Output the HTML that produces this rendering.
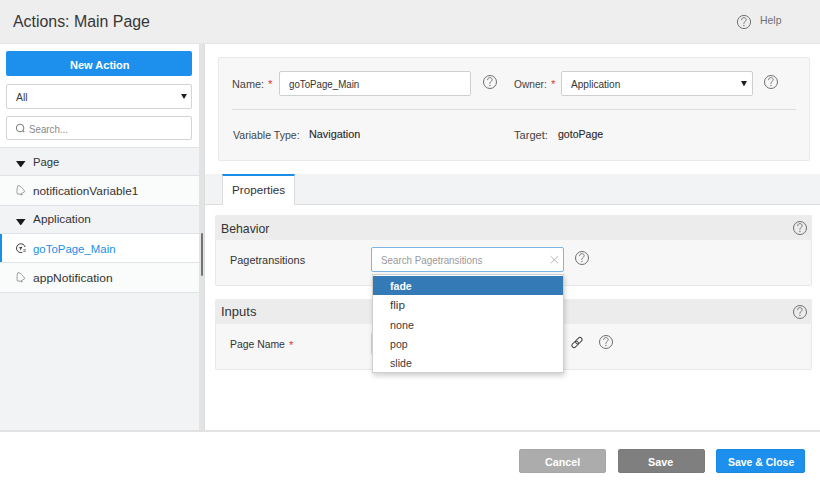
<!DOCTYPE html>
<html><head><meta charset="utf-8">
<style>
*{box-sizing:border-box;margin:0;padding:0}
html,body{width:820px;height:488px;overflow:hidden;background:#fff;font-family:"Liberation Sans",sans-serif;color:#333}
.a{position:absolute}
.t{position:absolute;line-height:1;white-space:pre}
</style></head><body>
<div class="a" style="left:0px;top:0px;width:820px;height:43px;background:#eeeeee;"></div>
<div class="a" style="left:0px;top:43px;width:820px;height:1px;background:#e4e4e4;"></div>
<div class="t" style="left:13.00px;top:14.00px;font-size:15.6px;color:#363636;font-weight:normal;transform:scaleX(1.0191);transform-origin:0 0;">Actions: Main Page</div>
<svg class="a" style="left:736.0px;top:14.0px" width="16" height="16" viewBox="0 0 16 16"><circle cx="8" cy="8" r="6.6" fill="none" stroke="#707070" stroke-width="1"/><path d="M5.6 6.1 C5.6 4.5 6.6 3.6 7.9 3.6 C9.3 3.6 10.2 4.5 10.2 5.8 C10.2 7.3 7.9 7.6 7.9 9.2 L7.9 9.9" fill="none" stroke="#707070" stroke-width="0.9"/><circle cx="7.9" cy="11.5" r="0.65" fill="#707070"/></svg>
<div class="t" style="left:760.07px;top:15.00px;font-size:11.5px;color:#6e6e6e;font-weight:normal;transform:scaleX(0.9056);transform-origin:0 0;">Help</div>
<div class="a" style="left:0px;top:44px;width:200px;height:386px;background:#f2f3f5;"></div>
<div class="a" style="left:0px;top:44px;width:200px;height:103px;background:#ffffff;"></div>
<div class="a" style="left:199px;top:44px;width:6px;height:386px;background:#e3e3e3;"></div>
<div class="a" style="left:204px;top:44px;width:1px;height:386px;background:#dcdcdc;"></div>
<div class="a" style="left:201px;top:233px;width:2px;height:43px;background:#747474;border-radius:1px"></div>
<div class="a" style="left:6px;top:51px;width:186px;height:25px;background:#1c90ec;border-radius:2px"></div>
<div class="t" style="left:69.83px;top:60.00px;font-size:11.5px;color:#fff;font-weight:bold;transform:scaleX(0.9577);transform-origin:0 0;">New Action</div>
<div class="a" style="left:6px;top:84px;width:186px;height:25px;background:#fff;border:1px solid #d4d4d4;border-radius:2px"></div>
<div class="t" style="left:16.00px;top:93.00px;font-size:10.2px;color:#3c3c3c;font-weight:normal;transform:scaleX(1.0271);transform-origin:0 0;">All</div>
<svg class="a" style="left:180.5px;top:93.8px" width="6" height="5" viewBox="0 0 6 5"><path d="M0 0 L6 0 L3.0 5 Z" fill="#1f1f1f"/></svg>
<div class="a" style="left:6px;top:116px;width:186px;height:24px;background:#fff;border:1px solid #d4d4d4;border-radius:2px"></div>
<svg class="a" style="left:14px;top:122px" width="13" height="13" viewBox="0 0 13 13"><circle cx="6.1" cy="6" r="3.8" fill="none" stroke="#7a7a7a" stroke-width="1"/><path d="M8.8 8.7 L10.3 10.2" stroke="#7a7a7a" stroke-width="1.1"/></svg>
<div class="t" style="left:28.91px;top:124.00px;font-size:11px;color:#888;font-weight:normal;transform:scaleX(0.8855);transform-origin:0 0;">Search...</div>
<div class="a" style="left:0px;top:147px;width:199px;height:1px;background:#e4e4e4;"></div>
<div class="a" style="left:0px;top:148px;width:199px;height:27px;background:#f2f3f5;"></div>
<div class="a" style="left:0px;top:175px;width:199px;height:1px;background:#dfe3e8;"></div>
<div class="t" style="left:32.76px;top:157.00px;font-size:11.5px;color:#333;font-weight:normal;transform:scaleX(0.9774);transform-origin:0 0;">Page</div>
<svg class="a" style="left:16.3px;top:160.6px" width="9.5" height="6.5" viewBox="0 0 9.5 6.5"><path d="M0 0 L9.5 0 L4.75 6.5 Z" fill="#1a1a1a"/></svg>
<div class="a" style="left:0px;top:176px;width:199px;height:29px;background:#fafbfb;"></div>
<div class="a" style="left:0px;top:205px;width:199px;height:1px;background:#dfe3e8;"></div>
<div class="t" style="left:32.83px;top:186.00px;font-size:11.5px;color:#333;font-weight:normal;transform:scaleX(1.0249);transform-origin:0 0;">notificationVariable1</div>
<svg class="a" style="left:15px;top:184px" width="12" height="13" viewBox="0 0 12 13"><path d="M3 1.5 C5.5 1.8 8 4.5 9.8 7.6 L5.8 10.2 L2.2 9.9 C1.8 7 1.9 3.5 3 1.5 Z" fill="none" stroke="#999" stroke-width="0.95" stroke-linejoin="round"/><path d="M5.8 10 L7.4 11.1" fill="none" stroke="#888" stroke-width="1.1"/></svg>
<div class="a" style="left:0px;top:206px;width:199px;height:27px;background:#f2f3f5;"></div>
<div class="a" style="left:0px;top:233px;width:199px;height:1px;background:#dfe3e8;"></div>
<div class="t" style="left:32.90px;top:214.00px;font-size:11.5px;color:#333;font-weight:normal;transform:scaleX(1.0280);transform-origin:0 0;">Application</div>
<svg class="a" style="left:16.3px;top:218.6px" width="9.5" height="6.5" viewBox="0 0 9.5 6.5"><path d="M0 0 L9.5 0 L4.75 6.5 Z" fill="#1a1a1a"/></svg>
<div class="a" style="left:0px;top:234px;width:199px;height:28px;background:#ffffff;"></div>
<div class="a" style="left:0px;top:262px;width:199px;height:1px;background:#dfe3e8;"></div>
<div class="t" style="left:32.74px;top:244.00px;font-size:11.5px;color:#1a8fe8;font-weight:normal;transform:scaleX(0.9929);transform-origin:0 0;">goToPage_Main</div>
<svg class="a" style="left:15px;top:241px" width="12" height="12" viewBox="0 0 12 12"><path d="M10.15 6.06 A4.4 4.4 0 1 0 7.4 11.33" fill="none" stroke="#3a3a3a" stroke-width="1"/><path d="M3.1 7.0 L7.4 5.4 L5.3 9.9 L5.4 7.3 Z" fill="#1f1f1f"/><path d="M8.3 8.85 L11 8.85 M8.3 10.35 L10.6 10.35" stroke="#444" stroke-width="0.75"/></svg>
<div class="a" style="left:0px;top:263px;width:199px;height:29px;background:#fafbfb;"></div>
<div class="a" style="left:0px;top:292px;width:199px;height:1px;background:#dfe3e8;"></div>
<div class="t" style="left:32.92px;top:273.00px;font-size:11.5px;color:#333;font-weight:normal;transform:scaleX(1.0466);transform-origin:0 0;">appNotification</div>
<svg class="a" style="left:15px;top:271px" width="12" height="13" viewBox="0 0 12 13"><path d="M3 1.5 C5.5 1.8 8 4.5 9.8 7.6 L5.8 10.2 L2.2 9.9 C1.8 7 1.9 3.5 3 1.5 Z" fill="none" stroke="#999" stroke-width="0.95" stroke-linejoin="round"/><path d="M5.8 10 L7.4 11.1" fill="none" stroke="#888" stroke-width="1.1"/></svg>
<div class="a" style="left:0px;top:234px;width:2px;height:28px;background:#1a8fe8;"></div>
<div class="a" style="left:218px;top:57px;width:592px;height:104px;background:#f7f7f7;border:1px solid #e9e9e9;border-radius:2px"></div>
<div class="t" style="left:232.03px;top:79.00px;font-size:11.5px;color:#444;font-weight:normal;transform:scaleX(0.9449);transform-origin:0 0;">Name:</div>
<div class="t" style="left:267.97px;top:79.00px;font-size:11.5px;color:#e53935;font-weight:normal;transform:scaleX(0.9938);transform-origin:0 0;">*</div>
<div class="a" style="left:279px;top:71px;width:192px;height:25px;background:#fff;border:1px solid #cfcfcf;border-radius:2px"></div>
<div class="t" style="left:288.81px;top:80.00px;font-size:10.2px;color:#333;font-weight:normal;transform:scaleX(0.9542);transform-origin:0 0;">goToPage_Main</div>
<svg class="a" style="left:481.7px;top:74.0px" width="16" height="16" viewBox="0 0 16 16"><circle cx="8" cy="8" r="6.5" fill="none" stroke="#6f6f6f" stroke-width="1"/><path d="M5.6 6.1 C5.6 4.5 6.6 3.6 7.9 3.6 C9.3 3.6 10.2 4.5 10.2 5.8 C10.2 7.3 7.9 7.6 7.9 9.2 L7.9 9.9" fill="none" stroke="#6f6f6f" stroke-width="0.9"/><circle cx="7.9" cy="11.5" r="0.65" fill="#6f6f6f"/></svg>
<div class="t" style="left:513.89px;top:79.00px;font-size:11.5px;color:#444;font-weight:normal;transform:scaleX(0.8851);transform-origin:0 0;">Owner:</div>
<div class="t" style="left:550.52px;top:79.00px;font-size:11.5px;color:#e53935;font-weight:normal;transform:scaleX(0.9938);transform-origin:0 0;">*</div>
<div class="a" style="left:561px;top:71px;width:192px;height:25px;background:#fff;border:1px solid #cfcfcf;border-radius:2px"></div>
<div class="t" style="left:570.80px;top:80.00px;font-size:10.2px;color:#333;font-weight:normal;transform:scaleX(0.9885);transform-origin:0 0;">Application</div>
<svg class="a" style="left:741.25px;top:80.5px" width="6" height="5.5" viewBox="0 0 6 5.5"><path d="M0 0 L6 0 L3.0 5.5 Z" fill="#1f1f1f"/></svg>
<svg class="a" style="left:763.3px;top:74.0px" width="16" height="16" viewBox="0 0 16 16"><circle cx="8" cy="8" r="6.5" fill="none" stroke="#6f6f6f" stroke-width="1"/><path d="M5.6 6.1 C5.6 4.5 6.6 3.6 7.9 3.6 C9.3 3.6 10.2 4.5 10.2 5.8 C10.2 7.3 7.9 7.6 7.9 9.2 L7.9 9.9" fill="none" stroke="#6f6f6f" stroke-width="0.9"/><circle cx="7.9" cy="11.5" r="0.65" fill="#6f6f6f"/></svg>
<div class="a" style="left:232px;top:109px;width:564px;height:1px;background:#dddddd;"></div>
<div class="t" style="left:232.59px;top:130.00px;font-size:11.5px;color:#444;font-weight:normal;transform:scaleX(0.9194);transform-origin:0 0;">Variable Type:</div>
<div class="t" style="left:309.23px;top:130.00px;font-size:10.2px;color:#2a2a2a;font-weight:normal;transform:scaleX(1.0639);transform-origin:0 0;-webkit-text-stroke:0.12px #2a2a2a;">Navigation</div>
<div class="t" style="left:514.08px;top:130.00px;font-size:11.5px;color:#444;font-weight:normal;transform:scaleX(0.9639);transform-origin:0 0;">Target:</div>
<div class="t" style="left:558.48px;top:130.00px;font-size:10.2px;color:#2a2a2a;font-weight:normal;transform:scaleX(1.0352);transform-origin:0 0;-webkit-text-stroke:0.12px #2a2a2a;">gotoPage</div>
<div class="a" style="left:205px;top:174px;width:615px;height:31px;background:#f2f3f5;"></div>
<div class="a" style="left:205px;top:204px;width:615px;height:1px;background:#dddddd;"></div>
<div class="a" style="left:222px;top:174px;width:73px;height:31px;background:#fff;border:1px solid #dcdcdc;border-bottom:none;border-top:2px solid #1a8fe8"></div>
<div class="t" style="left:232.27px;top:185.00px;font-size:11.5px;color:#333;font-weight:normal;transform:scaleX(1.0145);transform-origin:0 0;">Properties</div>
<div class="a" style="left:215px;top:215px;width:597px;height:71px;background:#f7f7f7;border:1px solid #e8e8e8;border-radius:2px"></div>
<div class="a" style="left:215px;top:215px;width:597px;height:25px;background:#ececec;border-radius:2px 2px 0 0"></div>
<div class="t" style="left:220.92px;top:222.00px;font-size:13px;color:#333;font-weight:normal;transform:scaleX(0.9431);transform-origin:0 0;">Behavior</div>
<svg class="a" style="left:792.4px;top:220.1px" width="16" height="16" viewBox="0 0 16 16"><circle cx="8" cy="8" r="6.5" fill="none" stroke="#6f6f6f" stroke-width="1"/><path d="M5.6 6.1 C5.6 4.5 6.6 3.6 7.9 3.6 C9.3 3.6 10.2 4.5 10.2 5.8 C10.2 7.3 7.9 7.6 7.9 9.2 L7.9 9.9" fill="none" stroke="#6f6f6f" stroke-width="0.9"/><circle cx="7.9" cy="11.5" r="0.65" fill="#6f6f6f"/></svg>
<div class="t" style="left:229.53px;top:255.00px;font-size:11.5px;color:#333;font-weight:normal;transform:scaleX(0.9472);transform-origin:0 0;">Pagetransitions</div>
<div class="a" style="left:371px;top:247px;width:193px;height:25px;background:#fff;border:1px solid #7ab6e8;border-radius:2px"></div>
<div class="t" style="left:381.41px;top:256.00px;font-size:10.2px;color:#999;font-weight:normal;transform:scaleX(0.9622);transform-origin:0 0;">Search Pagetransitions</div>
<svg class="a" style="left:549px;top:255px" width="10" height="10" viewBox="0 0 10 10"><path d="M1.7 1.2 L9.1 8.4 M9.1 1.2 L1.7 8.4" stroke="#aaa" stroke-width="0.85"/></svg>
<svg class="a" style="left:574.0px;top:250.2px" width="16" height="16" viewBox="0 0 16 16"><circle cx="8" cy="8" r="6.5" fill="none" stroke="#6f6f6f" stroke-width="1"/><path d="M5.6 6.1 C5.6 4.5 6.6 3.6 7.9 3.6 C9.3 3.6 10.2 4.5 10.2 5.8 C10.2 7.3 7.9 7.6 7.9 9.2 L7.9 9.9" fill="none" stroke="#6f6f6f" stroke-width="0.9"/><circle cx="7.9" cy="11.5" r="0.65" fill="#6f6f6f"/></svg>
<div class="a" style="left:215px;top:299px;width:597px;height:71px;background:#f7f7f7;border:1px solid #e8e8e8;border-radius:2px"></div>
<div class="a" style="left:215px;top:299px;width:597px;height:25px;background:#ececec;border-radius:2px 2px 0 0"></div>
<div class="t" style="left:220.73px;top:306.00px;font-size:12.6px;color:#333;font-weight:normal;transform:scaleX(1.0333);transform-origin:0 0;">Inputs</div>
<svg class="a" style="left:792.4px;top:304.0px" width="16" height="16" viewBox="0 0 16 16"><circle cx="8" cy="8" r="6.5" fill="none" stroke="#6f6f6f" stroke-width="1"/><path d="M5.6 6.1 C5.6 4.5 6.6 3.6 7.9 3.6 C9.3 3.6 10.2 4.5 10.2 5.8 C10.2 7.3 7.9 7.6 7.9 9.2 L7.9 9.9" fill="none" stroke="#6f6f6f" stroke-width="0.9"/><circle cx="7.9" cy="11.5" r="0.65" fill="#6f6f6f"/></svg>
<div class="t" style="left:229.57px;top:339.00px;font-size:11.5px;color:#333;font-weight:normal;transform:scaleX(0.9033);transform-origin:0 0;">Page Name</div>
<div class="t" style="left:288.68px;top:339.50px;font-size:11.5px;color:#e53935;font-weight:normal;transform:scaleX(0.9565);transform-origin:0 0;">*</div>
<div class="a" style="left:371px;top:332px;width:192px;height:23px;background:#fff;border:1px solid #d4d4d4;border-radius:2px"></div>
<svg class="a" style="left:570px;top:336px" width="14" height="13" viewBox="0 0 14 13"><g transform="rotate(-45 7 6.5)"><rect x="0.75" y="4.4" width="7.3" height="4.2" rx="2.1" fill="none" stroke="#3a3a3a" stroke-width="0.95"/><rect x="5.95" y="4.4" width="7.3" height="4.2" rx="2.1" fill="none" stroke="#3a3a3a" stroke-width="0.95"/></g></svg>
<svg class="a" style="left:597.9px;top:333.5px" width="16" height="16" viewBox="0 0 16 16"><circle cx="8" cy="8" r="6.5" fill="none" stroke="#6f6f6f" stroke-width="1"/><path d="M5.6 6.1 C5.6 4.5 6.6 3.6 7.9 3.6 C9.3 3.6 10.2 4.5 10.2 5.8 C10.2 7.3 7.9 7.6 7.9 9.2 L7.9 9.9" fill="none" stroke="#6f6f6f" stroke-width="0.9"/><circle cx="7.9" cy="11.5" r="0.65" fill="#6f6f6f"/></svg>
<div class="a" style="left:372px;top:274px;width:192px;height:99px;background:#fff;border:1px solid #cfcfcf;box-shadow:1px 3px 5px rgba(0,0,0,.18)"></div>
<div class="a" style="left:373px;top:276px;width:190px;height:19px;background:#337ab7;"></div>
<div class="t" style="left:389.89px;top:281.00px;font-size:11px;color:#fff;font-weight:bold;transform:scaleX(0.9614);transform-origin:0 0;">fade</div>
<div class="t" style="left:390.48px;top:300.00px;font-size:11.5px;color:#3a3a3a;font-weight:normal;transform:scaleX(1.0180);transform-origin:0 0;">flip</div>
<div class="t" style="left:389.85px;top:320.00px;font-size:11.5px;color:#3a3a3a;font-weight:normal;transform:scaleX(0.9334);transform-origin:0 0;">none</div>
<div class="t" style="left:389.86px;top:339.00px;font-size:11.5px;color:#3a3a3a;font-weight:normal;transform:scaleX(0.9200);transform-origin:0 0;">pop</div>
<div class="t" style="left:390.28px;top:358.00px;font-size:11.5px;color:#3a3a3a;font-weight:normal;transform:scaleX(0.9200);transform-origin:0 0;">slide</div>
<div class="a" style="left:0px;top:430px;width:820px;height:2px;background:#e2e2e2;"></div>
<div class="a" style="left:519px;top:449px;width:87px;height:24px;background:#acacac;border:1px solid #a6a6a6;border-radius:2px"></div>
<div class="t" style="left:544.97px;top:457.00px;font-size:11.5px;color:#fff;font-weight:bold;transform:scaleX(0.9354);transform-origin:0 0;">Cancel</div>
<div class="a" style="left:618px;top:449px;width:87px;height:24px;background:#7f7f7f;border:1px solid #7a7a7a;border-radius:2px"></div>
<div class="t" style="left:648.43px;top:457.00px;font-size:11.5px;color:#fff;font-weight:bold;transform:scaleX(0.9385);transform-origin:0 0;">Save</div>
<div class="a" style="left:716px;top:449px;width:89px;height:24px;background:#1c90ec;border:1px solid #188ae4;border-radius:2px"></div>
<div class="t" style="left:727.69px;top:457.00px;font-size:11.5px;color:#fff;font-weight:bold;transform:scaleX(0.9084);transform-origin:0 0;">Save &amp; Close</div>
</body></html>
